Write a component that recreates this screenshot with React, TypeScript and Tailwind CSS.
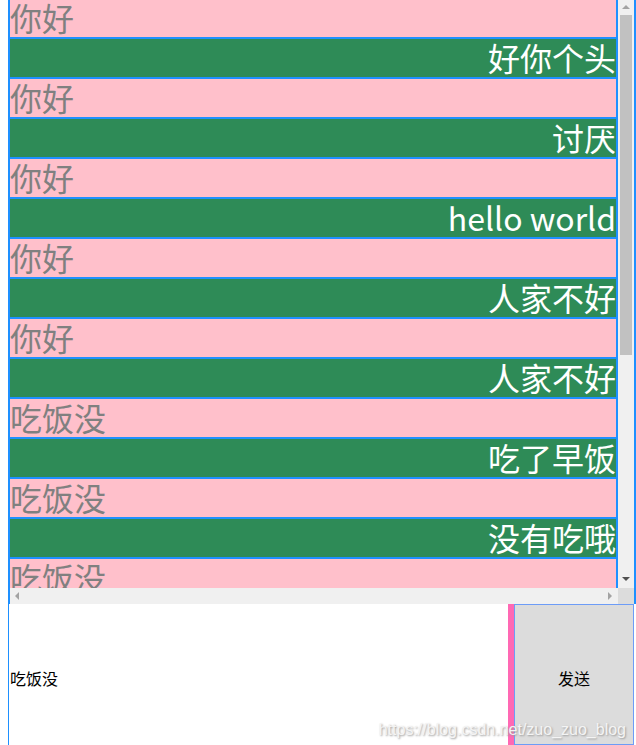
import React from "react";

type Message = { text: string; mine: boolean };

const messages: Message[] = [
  { text: "你好", mine: false },
  { text: "好你个头", mine: true },
  { text: "你好", mine: false },
  { text: "讨厌", mine: true },
  { text: "你好", mine: false },
  { text: "hello world", mine: true },
  { text: "你好", mine: false },
  { text: "人家不好", mine: true },
  { text: "你好", mine: false },
  { text: "人家不好", mine: true },
  { text: "吃饭没", mine: false },
  { text: "吃了早饭", mine: true },
  { text: "吃饭没", mine: false },
  { text: "没有吃哦", mine: true },
  { text: "吃饭没", mine: false },
  { text: "吃了", mine: true },
  { text: "你好", mine: false },
];

const font = { fontFamily: '"Noto Sans CJK SC", "Noto Sans", sans-serif' };

function VerticalScrollbar() {
  return (
    <div className="flex w-[16px] shrink-0 flex-col items-center bg-[#f0f0f0]">
      <div className="flex h-[14px] w-full items-center justify-center">
        <div className="h-0 w-0 border-x-[4px] border-b-[4px] border-x-transparent border-b-[#a3a3a3]" />
      </div>
      <div className="mt-px h-[340px] w-[12px] bg-[#c1c1c1]" />
      <div className="flex-1" />
      <div className="flex h-[18px] w-full items-center justify-center">
        <div className="h-0 w-0 border-x-[4px] border-t-[4px] border-x-transparent border-t-[#505050]" />
      </div>
    </div>
  );
}

function HorizontalScrollbar() {
  return (
    <div className="flex h-[16px] shrink-0">
      <div className="flex flex-1 items-center justify-between bg-[#f0f0f0] pl-[5px] pr-[6px]">
        <div className="h-0 w-0 border-y-[4px] border-r-[4px] border-y-transparent border-r-[#a3a3a3]" />
        <div className="h-0 w-0 border-y-[4px] border-l-[4px] border-y-transparent border-l-[#a3a3a3]" />
      </div>
      <div className="w-[16px] bg-[#dcdcdc]" />
    </div>
  );
}

export default function App() {
  return (
    <div className="relative h-[745px] w-[636px] overflow-hidden bg-white pl-[8px]" style={font}>
      <div className="flex h-[604px] w-[628px] flex-col border-x-2 border-[#1e90ff]">
        <div className="flex h-[588px]">
          <div className="flex-1 overflow-hidden">
            <div className="-mt-[2px]">
              {messages.map((message, index) => (
                <div
                  key={index}
                  className={`h-[40px] overflow-hidden whitespace-nowrap border-y border-r-2 border-[#1e90ff] text-[32px] leading-[37px] ${
                    message.mine
                      ? "bg-[#2e8b57] text-right text-white"
                      : "bg-[#ffc0cb] text-left text-[#808080]"
                  }`}
                >
                  {message.text}
                </div>
              ))}
            </div>
          </div>
          <VerticalScrollbar />
        </div>
        <HorizontalScrollbar />
      </div>

      <div className="flex h-[141px] w-[626px]">
        <div className="flex w-[500px] items-center border-l border-[#1e90ff] pl-[1px] pt-[7px] text-[16px] text-black">
          吃饭没
        </div>
        <div className="w-[6px] bg-[#ff69b4]" />
        <div className="flex flex-1 items-center justify-center border border-[#6d9cf7] bg-[#dcdcdc] pt-[7px] text-[16px] text-black">
          发送
        </div>
      </div>

      <div
        className="absolute bottom-[5px] right-[10px] text-[16px] leading-[20px] text-[#f4f4f4]"
        style={{ fontFamily: '"Liberation Sans", Arial, sans-serif', textShadow: "1px 1px 2px #9a9a9a" }}
      >
        https://blog.csdn.net/zuo_zuo_blog
      </div>
    </div>
  );
}
